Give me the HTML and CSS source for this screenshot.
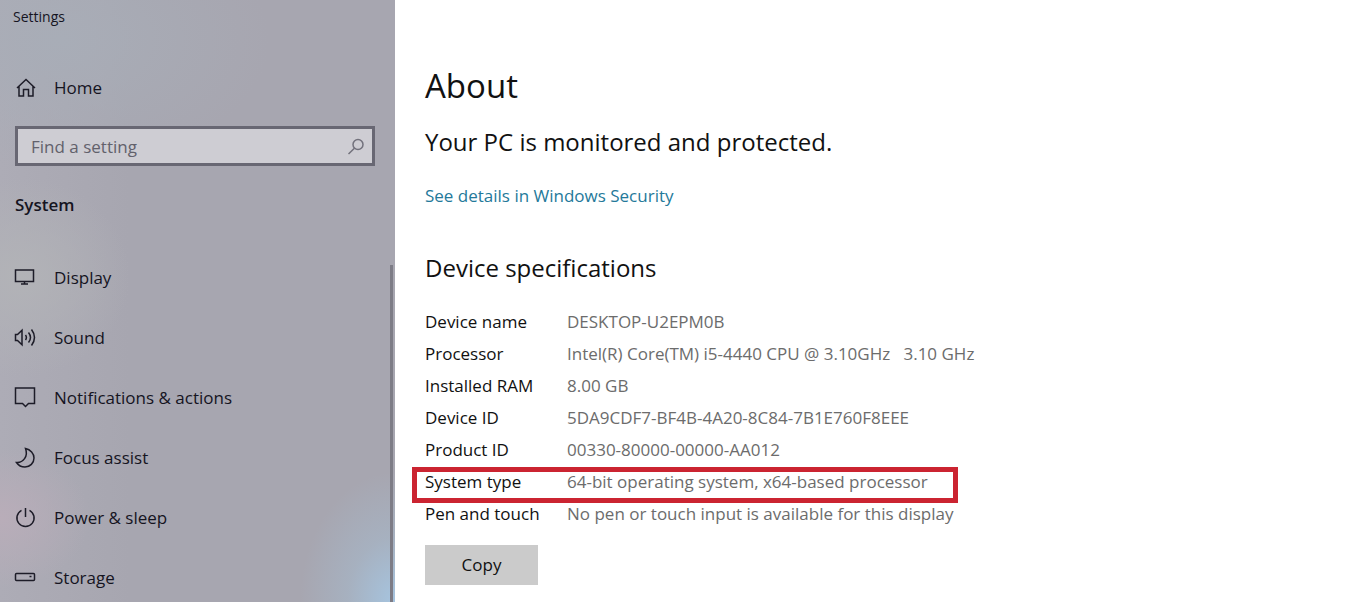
FILE: index.html
```html
<!DOCTYPE html>
<html lang="en">
<head>
<meta charset="utf-8">
<meta name="viewport" content="width=device-width, initial-scale=1">
<title>Settings</title>
<link rel="stylesheet" href="styles.css">
</head>
<body>
<div class="window">
  <aside class="sidebar">
    <div class="app-title">Settings</div>
    <a class="nav-link home" href="#home">
      <svg class="icon" viewBox="0 0 22 22" aria-hidden="true"><path d="M3 11 12 2.500l9 8.500M5 9.500V19h4.500v-6.500h5V19H19V9.500"/></svg>
      <span>Home</span>
    </a>
    <form class="search" role="search">
      <input class="search-input" type="text" placeholder="Find a setting" aria-label="Find a setting">
      <svg class="search-icon" viewBox="0 0 18 18" aria-hidden="true"><circle cx="11" cy="6.500" r="5"/><path d="M7.400 10.200 1.500 16"/></svg>
    </form>
    <h2 class="section-title">System</h2>
    <nav class="nav">
      <a class="nav-link" href="#display">
        <svg class="icon" viewBox="0 0 22 22" aria-hidden="true"><path d="M1.500 3h18v11.500h-18zM10.500 14.500V17M7 17h7"/></svg>
        <span>Display</span>
      </a>
      <a class="nav-link" href="#sound">
        <svg class="icon" viewBox="0 0 22 22" aria-hidden="true"><path d="M1.500 7.500h2L8 3.200v14.600L3.500 13.500h-2zM11.500 8q1.800 2.500 0 5M14.500 5.500q4 5 0 10M17.500 2.500q6 8 0 16"/></svg>
        <span>Sound</span>
      </a>
      <a class="nav-link" href="#notifications">
        <svg class="icon" viewBox="0 0 22 22" aria-hidden="true"><path d="M1.500 1h19v15.500h-6L11.500 19.500 8.500 16.500h-7z"/></svg>
        <span>Notifications &amp; actions</span>
      </a>
      <a class="nav-link" href="#focus">
        <svg class="icon" viewBox="0 0 22 22" aria-hidden="true"><path d="M11.500 1.500C16.500 2.500 20 6.500 20 11c0 5-4 9-9 9-3.500 0-6.500-1.500-8.500-4.500C9 16 14.500 9.500 11.500 1.500z"/></svg>
        <span>Focus assist</span>
      </a>
      <a class="nav-link" href="#power">
        <svg class="icon" viewBox="0 0 22 22" aria-hidden="true"><path d="M7.500 3.300a8.600 8.600 0 1 0 8 0M11.500 1v9"/></svg>
        <span>Power &amp; sleep</span>
      </a>
      <a class="nav-link" href="#storage">
        <svg class="icon" viewBox="0 0 22 22" aria-hidden="true"><rect x="1.500" y="6.500" width="19" height="7" rx="1"/><path d="M15.500 9.500h2"/></svg>
        <span>Storage</span>
      </a>
    </nav>
    <div class="scroll-thumb"></div>
  </aside>
  <main class="content">
    <h1 class="page-title">About</h1>
    <p class="status">Your PC is monitored and protected.</p>
    <a class="security-link" href="#security">See details in Windows Security</a>
    <h2 class="subtitle">Device specifications</h2>
    <table class="specs">
      <tbody>
        <tr><th scope="row">Device name</th><td>DESKTOP-U2EPM0B</td></tr>
        <tr><th scope="row">Processor</th><td>Intel(R) Core(TM) i5-4440 CPU @ 3.10GHz &nbsp; 3.10 GHz</td></tr>
        <tr><th scope="row">Installed RAM</th><td>8.00 GB</td></tr>
        <tr><th scope="row">Device ID</th><td>5DA9CDF7-BF4B-4A20-8C84-7B1E760F8EEE</td></tr>
        <tr><th scope="row">Product ID</th><td>00330-80000-00000-AA012</td></tr>
        <tr class="highlight"><th scope="row">System type</th><td>64-bit operating system, x64-based processor</td></tr>
        <tr><th scope="row">Pen and touch</th><td>No pen or touch input is available for this display</td></tr>
      </tbody>
    </table>
    <button class="copy" type="button">Copy</button>
  </main>
</div>
</body>
</html>
```
FILE: styles.css
```css
*,
*::before { box-sizing: border-box; }

body {
  margin: 0;
  background: #fff;
  color: #111;
  font: 17px/24px "Open Sans", "Noto Sans", sans-serif;
}

.window {
  display: flex;
  height: 100vh;
  overflow: hidden;
}

.sidebar {
  position: relative;
  flex: 0 0 395px;
  display: flex;
  flex-direction: column;
  overflow: hidden;
  color: #15141f;
  background:
    radial-gradient(ellipse 95px 130px at 100% 100%, #a6c4df 0, #a6bacd88 50%, #a7a6b000),
    radial-gradient(ellipse 90px 70px at 0 86%, #b9adb9, #b9adb900),
    radial-gradient(ellipse 110px 100px at 20px 46%, #b2b3b7, #b2b3b700),
    radial-gradient(ellipse 210px 130px at 60px 40px, #a8adb7, #a8adb700),
    linear-gradient(90deg, #adacb6 0, #a7a6b0 130px);
}

.app-title {
  padding: 7px 13px;
  font-size: 14px;
  line-height: 20px;
}

.nav-link {
  display: flex;
  flex-shrink: 0;
  align-items: center;
  gap: 18px;
  height: 60px;
  padding: 0 14px;
  color: inherit;
  text-decoration: none;
}

.home { margin-top: 24px; }

.icon {
  width: 22px;
  height: 22px;
  fill: none;
  stroke: #1d1c28;
  stroke-width: 1.5;
}

.search {
  position: relative;
  margin: 8px 20px 0 15px;
}

.search-input {
  display: block;
  width: 100%;
  height: 40px;
  padding: 0 40px 0 13px;
  border: 3px solid #686773;
  border-radius: 0;
  background: #cecdd3;
  color: #15141f;
  font: inherit;
}

.search-input::placeholder { color: #62616b; opacity: 1; }

.search-icon {
  position: absolute;
  top: 12px;
  right: 10px;
  width: 18px;
  height: 18px;
  fill: none;
  stroke: #72717c;
  stroke-width: 1.5;
}

.section-title {
  margin: 27px 15px 31px;
  font-size: 17px;
  font-weight: 600;
}

.scroll-thumb {
  position: absolute;
  top: 265px;
  right: 2px;
  bottom: 0;
  width: 3px;
  background: #7d7c86;
}

.content {
  flex: 1;
  display: flex;
  flex-direction: column;
  align-items: flex-start;
  padding: 62px 30px 16px;
}

.page-title {
  margin: 0;
  font-size: 33px;
  font-weight: 400;
  line-height: 48px;
}

.status {
  margin: 16px 0 0;
  font-size: 24px;
  line-height: 32px;
}

.security-link {
  margin-top: 26px;
  color: #24799a;
  text-decoration: none;
}

.subtitle {
  margin: 44px 0 0;
  font-size: 24px;
  font-weight: 400;
  line-height: 32px;
}

.specs {
  margin-top: 22px;
  border-collapse: collapse;
}

.specs th,
.specs td {
  height: 32px;
  padding: 0;
  font-weight: 400;
  text-align: left;
  white-space: nowrap;
}

.specs th { width: 142px; }
.specs td { color: #6c6c6c; }

.highlight { position: relative; }

.highlight th::before {
  content: "";
  position: absolute;
  top: 1px;
  left: -13px;
  width: 546px;
  height: 36px;
  border: 5px solid #cb2431;
}

.copy {
  width: 113px;
  height: 40px;
  margin-top: 15px;
  border: 0;
  background: #cbcbcb;
  color: #111;
  font: inherit;
}
```
